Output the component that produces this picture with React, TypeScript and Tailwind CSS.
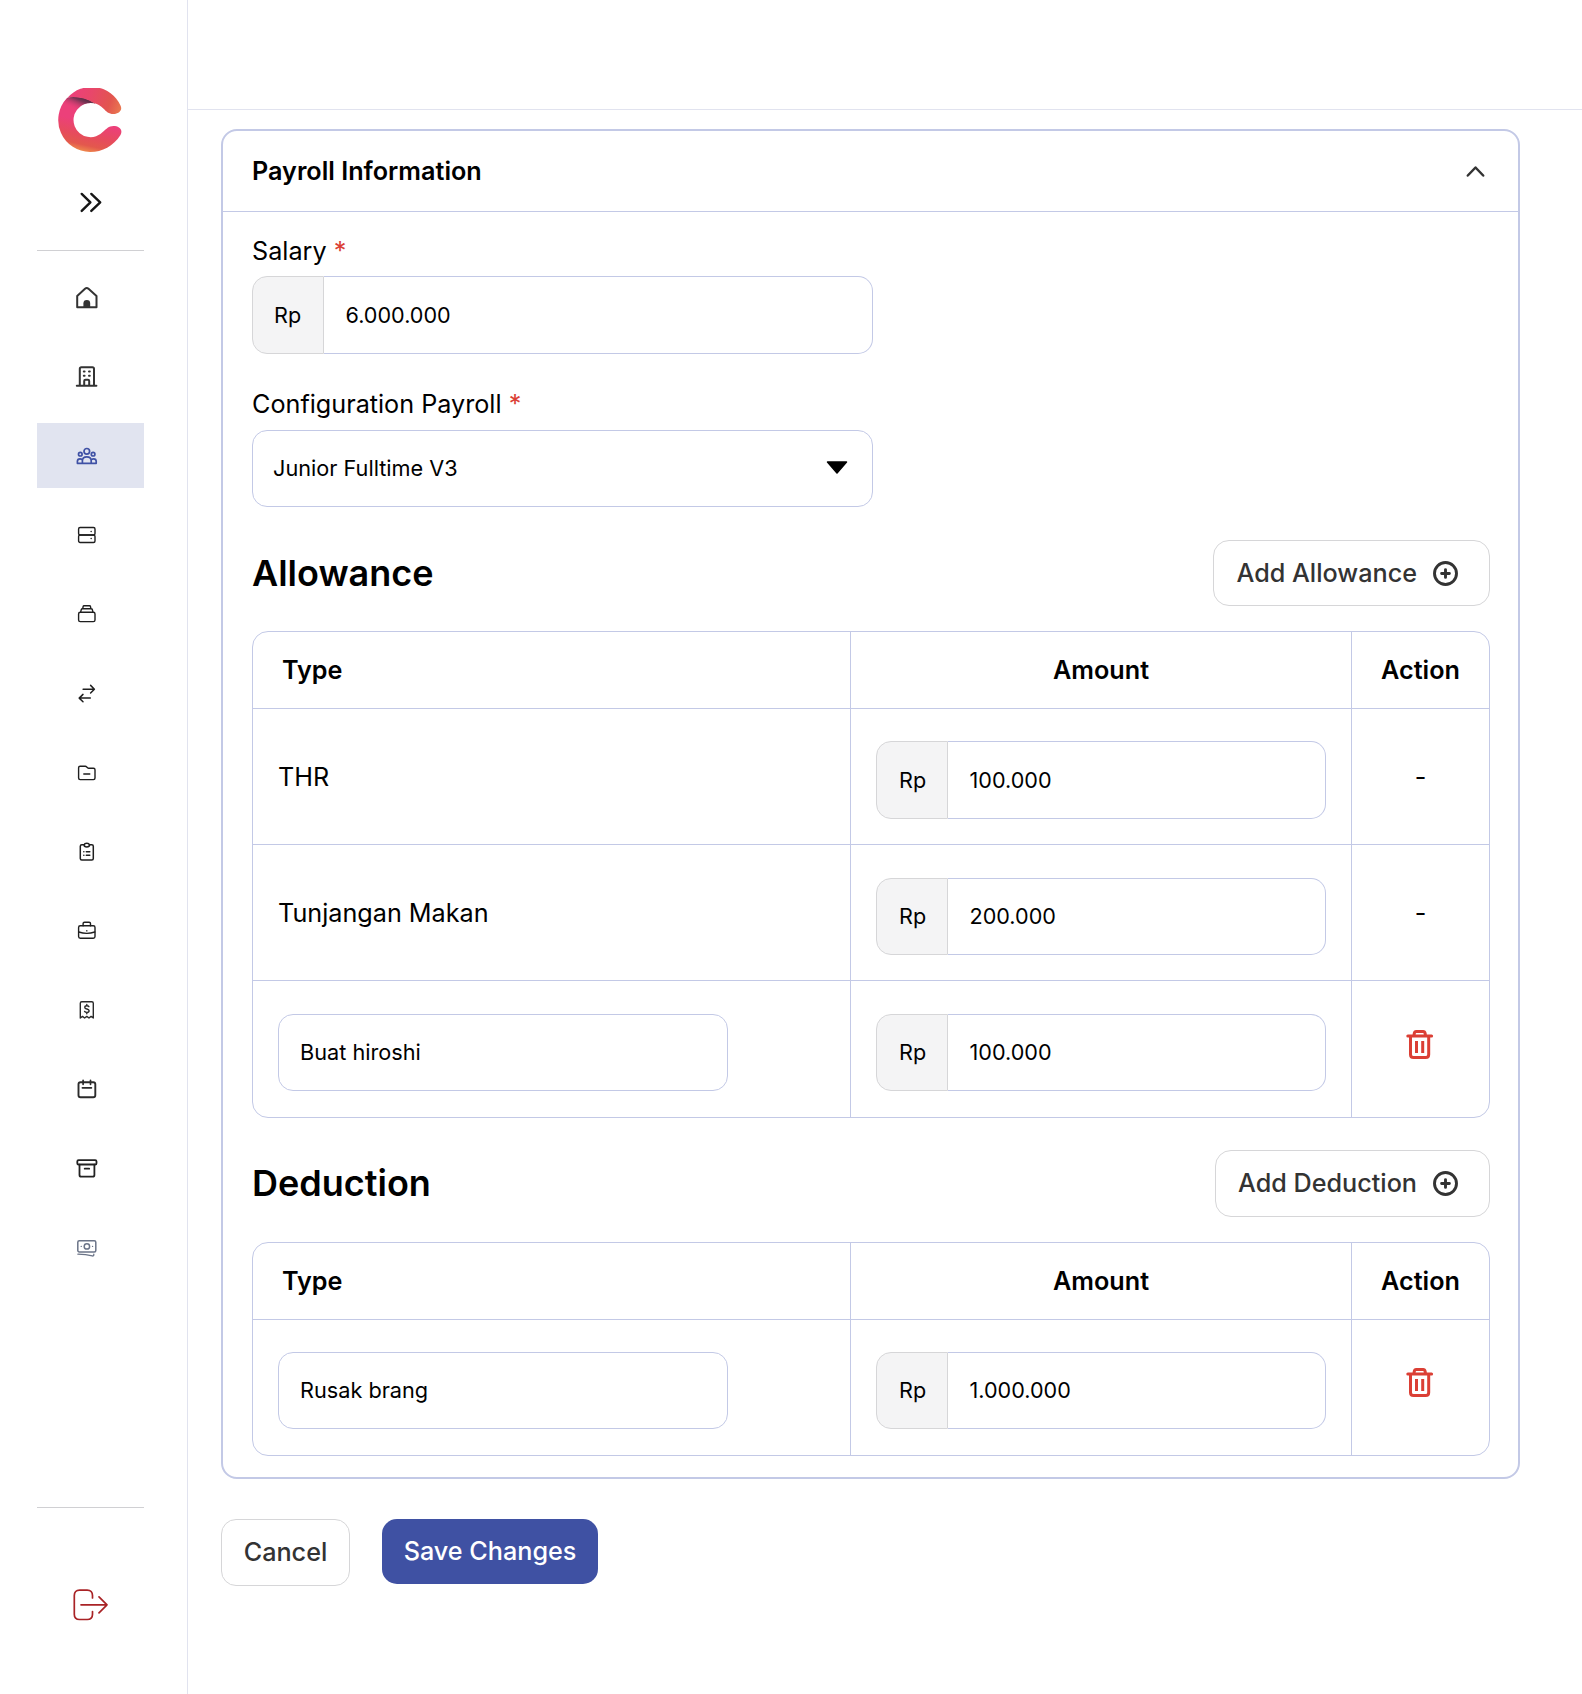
import React from "react";

const FIELD = "border-[#c3c9e6]";

type GlyphProps = { children: React.ReactNode; w?: number; color?: string; dx?: number; dy?: number };

function Glyph({ children, w = 1.3, color = "#1f1f1f", dx = 0, dy = 0 }: GlyphProps) {
  return (
    <svg width="24" height="24" viewBox={`${-dx} ${-dy} 24 24`} fill="none" stroke={color} strokeWidth={w} strokeLinecap="round" strokeLinejoin="round">
      {children}
    </svg>
  );
}

const navIcons: { name: string; icon: React.ReactNode }[] = [
  {
    name: "Home",
    icon: (
      <Glyph w={2} color="#333333" dy={-0.3}>
        <path d="M2.2 21.5V10.2L10 3.1c1-.9 2.5-.9 3.5 0l8 7.100V21.5z" />
        <path d="M8.4 21.5v-3.800a3.4 3.4 0 0 1 6.800 0v3.800z" fill="#333333" stroke="none" />
      </Glyph>
    ),
  },
  {
    name: "Company",
    icon: (
      <Glyph w={2} color="#333333" dy={-0.7}>
        <path d="M1.8 21.5h19.6M4.8 21V4.5c0-1 .6-1.6 1.6-1.6h11c1 0 1.6.6 1.6 1.6V21M9.2 21v-4.2c0-.8.5-1.3 1.3-1.3h2.400c.8 0 1.300.5 1.300 1.300V21" />
        <path d="M8.8 7.200h.8M14 7.200h.8M8.8 11.5h.8M14 11.5h.8" />
      </Glyph>
    ),
  },
  {
    name: "Employees",
    icon: (
      <Glyph w={1.7} color="#3f51a5" dx={-0.2}>
        <circle cx="12" cy="7.3" r="2.8" />
        <circle cx="5.5" cy="10.2" r="1.8" />
        <circle cx="18.3" cy="10.2" r="1.8" />
        <path d="M7.6 19.300v-2.5c0-2.6 1.700-4 4.400-4s4.400 1.400 4.400 4v2.5M2.600 19.300h18.800M2.600 19.300v-2c0-1.500 1-2.500 2.600-2.500.8 0 1.500.2 2.200.7M21.400 19.300v-2c0-1.500-1-2.500-2.600-2.500-.8 0-1.500.2-2.200.7" />
      </Glyph>
    ),
  },
  {
    name: "Data",
    icon: (
      <Glyph w={1.4} dx={-0.2}>
        <rect x="3.800" y="4.500" width="16.400" height="7.500" rx="1.500" />
        <rect x="3.800" y="12" width="16.400" height="7.500" rx="1.500" />
        <path d="M16.300 8.500h.1M16.300 15.500h.1" />
      </Glyph>
    ),
  },
  {
    name: "Stack",
    icon: (
      <Glyph w={1.4} dx={-0.2} dy={-0.7}>
        <rect x="3.800" y="11" width="16.400" height="9.300" rx="1.700" />
        <path d="M5.800 11l.6-2.500c.2-.6.600-1 1.200-1h8.800c.6 0 1 .4 1.200 1l.6 2.500M7.900 7.500l.4-2.200c.1-.6.500-.9 1-.9h5.400c.500 0 .9.300 1 .9l.4 2.200" />
      </Glyph>
    ),
  },
  {
    name: "Transfer",
    icon: (
      <Glyph w={1.5} dx={-0.2} dy={0.6}>
        <path d="M8.300 7.600h11.200M15.800 3.800l3.800 3.800-3.800 3.800M15.500 16.500H4.500M8.200 12.800l-3.800 3.700 3.800 3.700" />
      </Glyph>
    ),
  },
  {
    name: "Folder",
    icon: (
      <Glyph w={1.4} dx={-0.2}>
        <path d="M3.800 6.800c0-.9.600-1.500 1.500-1.500h5.200c.6 0 1 .2 1.400.6l.9.900c.3.300.6.400 1 .4h4.900c.9 0 1.500.6 1.500 1.500v8.400c0 .9-.6 1.500-1.500 1.500H5.300c-.9 0-1.500-.6-1.500-1.500zM9 13h6" />
      </Glyph>
    ),
  },
  {
    name: "Tasks",
    icon: (
      <Glyph w={1.5} dx={-0.2} dy={-0.2}>
        <path d="M9 5H7c-.9 0-1.500.6-1.500 1.500v12.200c0 .9.600 1.500 1.500 1.500h10c.9 0 1.500-.6 1.500-1.500V6.500c0-.9-.6-1.500-1.500-1.500h-2" />
        <path d="M9.300 5.200c.3-1.200 1.200-1.700 2.700-1.700s2.400.5 2.700 1.700c0 1.200-.9 1.900-2.700 1.900s-2.700-.7-2.700-1.900z" />
        <path d="M9 12h.1M11.500 12h3.500M9 15.500h.1M11.500 15.500h3.500" />
      </Glyph>
    ),
  },
  {
    name: "Work",
    icon: (
      <Glyph w={1.4} dx={-0.2} dy={-1.3}>
        <rect x="3.800" y="8" width="16.400" height="12.500" rx="1.700" />
        <path d="M8.300 8V5.900c0-.9.500-1.400 1.400-1.400h4.600c.9 0 1.400.5 1.400 1.400V8M4 14.300c5 1.700 11 1.700 16 0M12 13.100v.1" />
      </Glyph>
    ),
  },
  {
    name: "Invoices",
    icon: (
      <Glyph w={1.4} color="#2b2b2b" dx={-0.2}>
        <path d="M5.500 20V5.200c0-.9.600-1.500 1.500-1.500h10c.9 0 1.500.6 1.500 1.500V20l-2.200-1.600-2.100 1.600L12 18.400 9.800 20l-2.100-1.600z" />
        <path d="M14.100 8.700c-.4-.6-1.100-.9-2-.9-1.200 0-2.100.5-2.100 1.600 0 2.300 4.300 1 4.300 3.300 0 1.100-.9 1.700-2.200 1.700-1 0-1.900-.3-2.300-1M12 6.500v1.300M12 14.400v1.300" />
      </Glyph>
    ),
  },
  {
    name: "Calendar",
    icon: (
      <Glyph w={1.9} color="#2b2b2b" dx={-0.1} dy={-0.2}>
        <rect x="3.600" y="5.500" width="16.800" height="15" rx="2" />
        <path d="M8.200 3.500v4M15.600 3.500v4M7.500 11h9" strokeWidth="1.700" />
      </Glyph>
    ),
  },
  {
    name: "Archive",
    icon: (
      <Glyph w={1.8} color="#222222" dy={-0.8}>
        <rect x="2.300" y="4" width="19.200" height="4.300" rx="1.300" />
        <path d="M4.500 8.500v10.300c0 1 .6 1.700 1.700 1.700h11.500c1.100 0 1.700-.7 1.700-1.700V8.500M9.700 12.500h4.500" />
      </Glyph>
    ),
  },
  {
    name: "Cash",
    icon: (
      <Glyph w={1.5} color="#6b7488">
        <rect x="2.800" y="4.800" width="18" height="11.200" rx="1.500" />
        <circle cx="11.900" cy="10.400" r="2.700" />
        <path d="M6.200 10.400h.1M17.500 10.400h.1M2.900 18.200c5.300 0 10 .5 14.400 1.700.9.300 1.500-.2 1.500-1.100v-.6" strokeWidth="1.300" />
      </Glyph>
    ),
  },
];

function Logo() {
  return (
    <svg width="64" height="64" viewBox="0 0 64 64">
      <defs>
        <linearGradient id="lower" gradientUnits="userSpaceOnUse" x1="32" y1="34" x2="25" y2="66">
          <stop offset="0" stopColor="#ec407a" />
          <stop offset="0.45" stopColor="#e64c5c" />
          <stop offset="0.72" stopColor="#e3584d" />
          <stop offset="1" stopColor="#f49d4d" />
        </linearGradient>
        <linearGradient id="upper" gradientUnits="userSpaceOnUse" x1="14" y1="6" x2="62" y2="24">
          <stop offset="0" stopColor="#ec407a" />
          <stop offset="0.35" stopColor="#e8476a" />
          <stop offset="0.75" stopColor="#e2554f" />
          <stop offset="1" stopColor="#ea7850" />
        </linearGradient>
        <linearGradient id="shade" gradientUnits="userSpaceOnUse" x1="26" y1="9" x2="20" y2="23">
          <stop offset="0" stopColor="#4a2a3f" />
          <stop offset="0.3" stopColor="#6a3350" stopOpacity="0.9" />
          <stop offset="1" stopColor="#ec407a" stopOpacity="0" />
        </linearGradient>
        <clipPath id="ring">
          <path clipRule="evenodd" d="M0.500 32a32 32 0 1 0 64 0a32 32 0 1 0 -64 0ZM15.700 32a17 17 0 1 0 34 0a17 17 0 1 0 -34 0Z" />
        </clipPath>
      </defs>
      <path fill="url(#lower)" d="M9 10A32 32 0 0 0 32.500 64C44 64 55.500 58 62.500 47C65.500 41 60.500 38 55.500 38C50.500 38 48.500 41 45.300 43.500A17.100 17.100 0 1 1 34.300 15C28 9 17 8 9 10Z" />
      <g clipPath="url(#ring)">
        <path fill="url(#shade)" d="M9.500 9.500C17 7.500 28 9.500 37 15V26H0V18Z" />
      </g>
      <path fill="url(#upper)" d="M9.500 9.700A32 32 0 0 1 62.500 17.500C65 22.500 60.500 26 55.500 26C50.500 26 48.500 23.500 45.300 20.500A17 17 0 0 0 36.300 15.200C28 10 17 8 9.500 9.700Z" />
    </svg>
  );
}

function Sidebar() {
  return (
    <aside className="flex h-[1694px] w-[188px] shrink-0 flex-col border-r border-[#e1e3ef] pl-[37px]">
      <div className="mt-[88px] ml-[21px]">
        <Logo />
      </div>
      <svg className="mt-[39px] ml-[42px]" width="24" height="24" viewBox="0 0 24 24" fill="none" stroke="#161616" strokeWidth="2.400" strokeLinecap="round" strokeLinejoin="round">
        <path d="M2.700 2.900l8.700 8.500-8.700 8.500M12.300 2.900l8.900 8.500-8.900 8.500" />
      </svg>
      <div className="mt-[35px] h-px w-[107px] bg-[#d0d0d3]" />
      <nav className="mt-[14px] flex flex-col gap-[14.200px]">
        {navIcons.map((n) => (
          <a
            key={n.name}
            aria-label={n.name}
            className={n.name === "Employees" ? "flex h-[65px] w-[107px] items-center bg-[#e1e4f0] pl-[38px]" : "flex h-[65px] w-[107px] items-center pl-[38px]"}
          >
            {n.icon}
          </a>
        ))}
      </nav>
      <div className="mt-auto h-px w-[107px] bg-[#d0d0d3]" />
      <svg className="mt-[79px] mb-[71px] ml-[35px]" width="36" height="36" viewBox="0 0 36 36" fill="none" stroke="#a92326" strokeWidth="1.700" strokeLinecap="round" strokeLinejoin="round">
        <path d="M20.500 11V8.500c0-3.500-1.800-5.300-5.300-5.300H7.600c-3.500 0-5.300 1.800-5.300 5.300v18.700c0 3.500 1.800 5.300 5.300 5.300h7.600c3.500 0 5.300-1.800 5.300-5.300V24.500M9 17.800h26M27 9.800l8 8-8 8" />
      </svg>
    </aside>
  );
}

function RpInput({ value, className, prefix = "pl-[21px]", inner = "" }: { value: string; className: string; prefix?: string; inner?: string }) {
  return (
    <div className={`flex text-[21.600px] leading-7 text-black ${className}`}>
      <span className={`flex w-[72px] items-center rounded-l-[15px] border border-[#d6d6d8] bg-[#f4f4f5] ${prefix} ${inner}`}>Rp</span>
      <span className={`flex flex-1 items-center rounded-r-[15px] border border-l-0 pl-[21.500px] ${FIELD} ${inner}`}>{value}</span>
    </div>
  );
}

function PlusCircle() {
  return (
    <svg width="25" height="25" viewBox="0 0 25 25" fill="none" stroke="#333333" strokeWidth="2.900" strokeLinecap="round">
      <circle cx="12.500" cy="12.500" r="11" />
      <path d="M12.500 8.600v7.800M8.600 12.500h7.800" />
    </svg>
  );
}

function Trash({ className }: { className: string }) {
  return (
    <svg className={className} width="31" height="30" viewBox="0 0 31 30" fill="none" stroke="#db3f35" strokeWidth="3" strokeLinecap="round" strokeLinejoin="round">
      <path d="M2.800 5.900h23.800M5.500 6v18.500c0 2 1 3 3 3h12.200c2 0 3-1 3-3V6M8.900 5.500l.4-2.300c.2-1.100.8-1.700 1.900-1.700h7c1.100 0 1.700.6 1.900 1.700l.4 2.300" />
      <path d="M11.500 11v12M17.700 11v12" strokeLinecap="butt" />
    </svg>
  );
}

type Row = { type: string; amount: string; editable?: boolean; fieldClass: string; inner?: string };

function PayTable({ rows, lastRow, iconClass }: { rows: Row[]; lastRow: string; iconClass: string }) {
  return (
    <div className={`w-[1238px] rounded-[16px] border ${FIELD}`}>
      <div className="grid h-[76px] grid-cols-[598px_501px_137px] text-[25.200px] font-semibold">
        <div className={`flex items-center border-r pt-[2px] pl-[29px] ${FIELD}`}>Type</div>
        <div className={`flex items-center justify-center border-r pt-[2px] ${FIELD}`}>Amount</div>
        <div className="flex items-center justify-center pt-[2px]">Action</div>
      </div>
      {rows.map((r, i) => (
        <div key={r.type} className={`grid grid-cols-[598px_501px_137px] border-t text-[25.200px] ${FIELD} ${i === rows.length - 1 ? lastRow : "h-[136px]"}`}>
          <div className={`flex items-center border-r pl-[25px] ${FIELD}`}>
            {r.editable ? (
              <span className={`flex w-[450px] items-center rounded-[15px] border pl-[21px] text-[21.700px] ${r.fieldClass} ${FIELD}`}>{r.type}</span>
            ) : (
              <span className="pt-[2px]">{r.type}</span>
            )}
          </div>
          <div className={`flex items-center border-r pl-[25px] ${FIELD}`}>
            <RpInput value={r.amount} className={`w-[450px] ${r.fieldClass}`} prefix="pl-[22px]" inner={r.inner ?? "pb-[2px]"} />
          </div>
          <div className="flex items-center justify-center">{r.editable ? <Trash className={iconClass} /> : <span className="pt-[2px]">-</span>}</div>
        </div>
      ))}
    </div>
  );
}

function SectionHead({ title, action, height, textClass }: { title: string; action: string; height: string; textClass: string }) {
  return (
    <div className="flex w-[1238px] items-center justify-between">
      <h2 className={`text-[36px] font-semibold ${textClass === "" ? "pb-[2px]" : ""}`}>{title}</h2>
      <button className={`flex items-center rounded-[16px] border border-[#d6d6d8] pr-[31px] pl-[22px] text-[25.200px] font-medium text-[#333333] ${height}`}>
        <span className={`mr-[16px] ${textClass}`}>{action}</span>
        <PlusCircle />
      </button>
    </div>
  );
}

export default function App() {
  return (
    <div className="flex h-[1694px] w-[1582px] overflow-hidden bg-white font-['Inter',sans-serif] text-black">
      <Sidebar />
      <div className="flex flex-1 flex-col">
        <header className="h-[110px] border-b border-[#e1e3ef]" />
        <main className="pl-[33px]">
          <section className={`mt-[19px] h-[1350px] w-[1299px] rounded-[16px] border-2 ${FIELD}`}>
            <div className={`flex h-[81px] items-center justify-between border-b pr-[31px] pl-[29px] ${FIELD}`}>
              <h1 className="pt-[2px] text-[25.200px] font-semibold">Payroll Information</h1>
              <svg width="22" height="22" viewBox="0 0 22 22" fill="none" stroke="#333333" strokeWidth="2.500" strokeLinecap="round" strokeLinejoin="round">
                <path d="M2.800 15.500l7.700-8 7.700 8" />
              </svg>
            </div>
            <div className="pl-[29px]">
              <label className="mt-[24px] block text-[25.200px] leading-[30px]">
                Salary <span className="text-[#db3f35]">*</span>
              </label>
              <RpInput value="6.000.000" className="mt-[10px] h-[78px] w-[621px]" />
              <label className="mt-[35px] block text-[25.200px] leading-[30px]">
                Configuration Payroll <span className="text-[#db3f35]">*</span>
              </label>
              <div className={`mt-[11px] flex h-[77px] w-[621px] items-center justify-between rounded-[15px] border pr-[24px] pl-[20px] text-[21.700px] ${FIELD}`}>
                Junior Fulltime V3
                <svg className="mb-[2px]" width="22" height="14" viewBox="0 0 22 14">
                  <path d="M1.500 1h19l-9.500 11z" fill="#000" stroke="#000" strokeWidth="1.500" strokeLinejoin="round" />
                </svg>
              </div>
              <div className="mt-[33px]">
                <SectionHead title="Allowance" action="Add Allowance" height="h-[66px]" textClass="pt-[2px]" />
              </div>
              <div className="mt-[25px]">
                <PayTable
                  lastRow="h-[137px]"
                  iconClass="-mt-[9px]"
                  rows={[
                    { type: "THR", amount: "100.000", fieldClass: "mt-[7px] h-[78px]", inner: "pb-0" },
                    { type: "Tunjangan Makan", amount: "200.000", fieldClass: "mt-[8px] h-[77px]" },
                    { type: "Buat hiroshi", amount: "100.000", editable: true, fieldClass: "mt-[7px] h-[77px]" },
                  ]}
                />
              </div>
              <div className="mt-[32px]">
                <SectionHead title="Deduction" action="Add Deduction" height="h-[67px]" textClass="" />
              </div>
              <div className="mt-[25px]">
                <PayTable
                  lastRow="h-[136px]"
                  iconClass="-mt-[10px]"
                  rows={[{ type: "Rusak brang", amount: "1.000.000", editable: true, fieldClass: "mt-[6px] h-[77px]" }]}
                />
              </div>
            </div>
          </section>
          <div className="mt-[40px] flex items-start gap-[32px] text-[25.200px] font-medium">
            <button className="flex h-[67px] w-[129px] items-center justify-center rounded-[15px] border border-[#d6d6d8] text-[#333333]">Cancel</button>
            <button className="flex h-[65px] w-[216px] items-center justify-center rounded-[15px] bg-[#3f51a3] text-white">Save Changes</button>
          </div>
        </main>
      </div>
    </div>
  );
}
